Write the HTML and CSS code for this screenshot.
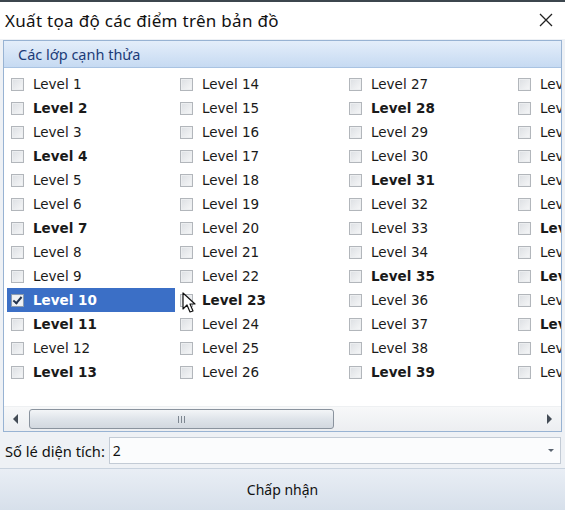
FILE: index.html
```
<!DOCTYPE html>
<html lang="vi">
<head>
    <meta charset="UTF-8">
    <title>Xuất tọa độ các điểm trên bản đồ</title>
    <link rel="stylesheet" href="styles.css">
</head>
<body>
    <div class="window">
        <div class="titlebar">
            <span class="title">Xuất tọa độ các điểm trên bản đồ</span>
            <span class="close">
                <svg width="14" height="14" viewBox="0 0 14 14"><path d="M1 1L13 13M13 1L1 13" stroke="#222" stroke-width="1.3"/></svg>
            </span>
        </div>

        <div class="group">
            <div class="group-header">Các lớp cạnh thửa</div>
            <div class="list" id="levelList"></div>
            <div class="hscroll">
                <span class="arrow left"></span>
                <div class="track">
                    <div class="thumb"><span class="grip"></span></div>
                </div>
                <span class="arrow right"></span>
            </div>
        </div>

        <div class="field">
            <label>Số lé diện tích:</label>
            <div class="combo">
                <span>2</span>
                <span class="drop"></span>
            </div>
        </div>

        <button class="accept">Chấp nhận</button>

        <svg class="cursor" width="14" height="22" viewBox="0 0 14 22">
            <path d="M1 1L1 17L5 13L8 20L11 19L8 12L13 12Z" fill="#fff" stroke="#111" stroke-width="1.2" stroke-linejoin="round"/>
        </svg>
    </div>

    <script src="list.js"></script>
</body>
</html>
```

FILE: list.js
```
// levels shown in bold, 10 is the selected one
var bold = [2, 4, 7, 10, 11, 13, 23, 28, 31, 35, 39, 46, 48, 50];
var list = document.getElementById('levelList');

for (var i = 1; i <= 52; i++) {
    var item = document.createElement('div');
    item.className = 'item';
    if (bold.indexOf(i) >= 0) item.className += ' bold';
    if (i === 10) item.className += ' selected';

    var box = document.createElement('span');
    box.className = 'check';
    if (i === 10) box.className += ' checked';

    var text = document.createElement('span');
    text.textContent = 'Level ' + i;

    item.appendChild(box);
    item.appendChild(text);
    list.appendChild(item);
}
```

FILE: styles.css
```
body {
    margin: 0;
    background: #fff;
    font-family: 'Noto Sans', sans-serif;
}
.window {
    position: relative;
    width: 565px;
    height: 510px;
    background: #eef1f5;
    border-top: 2px solid #3c464e;
    box-sizing: border-box;
    overflow: hidden;
}
.titlebar {
    height: 37px;
    background: #fff;
    display: flex;
    align-items: center;
    justify-content: space-between;
    padding: 0 12px 0 5px;
}
.title {
    font-size: 17px;
    color: #111;
    letter-spacing: 0.3px;
}
.close {
    display: flex;
    margin-top: -2px;
}
.group {
    margin: 1px 3px 0 3px;
    border: 1px solid #98b3d3;
    background: #fff;
}
.group-header {
    height: 26px;
    line-height: 26px;
    padding-left: 14px;
    font-size: 14.5px;
    color: #1c3c78;
    background: linear-gradient(#e4eefa, #c6daf2);
    border-bottom: 1px solid #a9c3e2;
}
.list {
    height: 334px;
    padding: 4px 0 0 3px;
    display: grid;
    grid-template-rows: repeat(13, 24px);
    grid-auto-flow: column;
    grid-auto-columns: 169px;
    overflow: hidden;
    font-family: 'DejaVu Sans', sans-serif;
    font-size: 13.5px;
    color: #1a1a1a;
}
.item {
    display: flex;
    align-items: center;
    gap: 9px;
    padding-left: 4px;
    width: 164px;
    white-space: nowrap;
}
.item.bold {
    font-weight: bold;
}
.item.selected {
    background: #3b6fc6;
    color: #fff;
}
.check {
    width: 11px;
    height: 11px;
    flex: none;
    border: 1px solid #b2b6bb;
    background: linear-gradient(135deg, #dcdfe3, #f6f7f8);
    box-shadow: inset 0 0 0 1px #eceef0;
}
.check.checked {
    position: relative;
    background: #eef1f5;
    border-color: #8a9bb0;
}
.check.checked::after {
    content: '';
    position: absolute;
    left: 3px;
    top: 0;
    width: 3px;
    height: 7px;
    border: solid #23344e;
    border-width: 0 2px 2px 0;
    transform: rotate(40deg);
}
.hscroll {
    height: 24px;
    display: flex;
    align-items: center;
    background: linear-gradient(#f7f8f9, #eceef1);
    padding: 0 4px;
    border-top: 1px solid #eef0f2;
}
.arrow {
    width: 0;
    height: 0;
    border-top: 5px solid transparent;
    border-bottom: 5px solid transparent;
    margin: 0 5px;
}
.arrow.left {
    border-right: 5px solid #444c56;
}
.arrow.right {
    border-left: 5px solid #444c56;
}
.track {
    flex: 1;
    height: 20px;
    padding: 0 3px 0 6px;
}
.thumb {
    width: 303px;
    height: 18px;
    border: 1px solid #8a939e;
    border-radius: 3px;
    background: linear-gradient(#f3f5f7, #dfe4ea 50%, #d2d8df);
    display: flex;
    align-items: center;
    justify-content: center;
}
.grip {
    width: 7px;
    height: 7px;
    background: repeating-linear-gradient(90deg, #7d8690 0 1px, transparent 1px 3px);
}
.field {
    display: flex;
    align-items: center;
    gap: 4px;
    padding: 5px 4px 4px 5px;
}
.field label {
    font-size: 14.7px;
    color: #111;
    white-space: nowrap;
}
.combo {
    flex: 1;
    height: 25px;
    border: 1px solid #c3cbd5;
    background: #fbfcfd;
    display: flex;
    align-items: center;
    justify-content: space-between;
    padding: 0 6px 0 3px;
    font-size: 14px;
    color: #111;
}
.drop {
    width: 0;
    height: 0;
    border-left: 3px solid transparent;
    border-right: 3px solid transparent;
    border-top: 3px solid #5b6470;
}
.accept {
    display: block;
    width: 100%;
    height: 44px;
    border: none;
    border-top: 1px solid #c8d2de;
    background: linear-gradient(#e9eef5, #d6dfea);
    font-family: 'Noto Sans', sans-serif;
    font-size: 14px;
    color: #111;
    padding: 0 0 3px 0;
}
.cursor {
    position: absolute;
    left: 182px;
    top: 290px;
}
```
